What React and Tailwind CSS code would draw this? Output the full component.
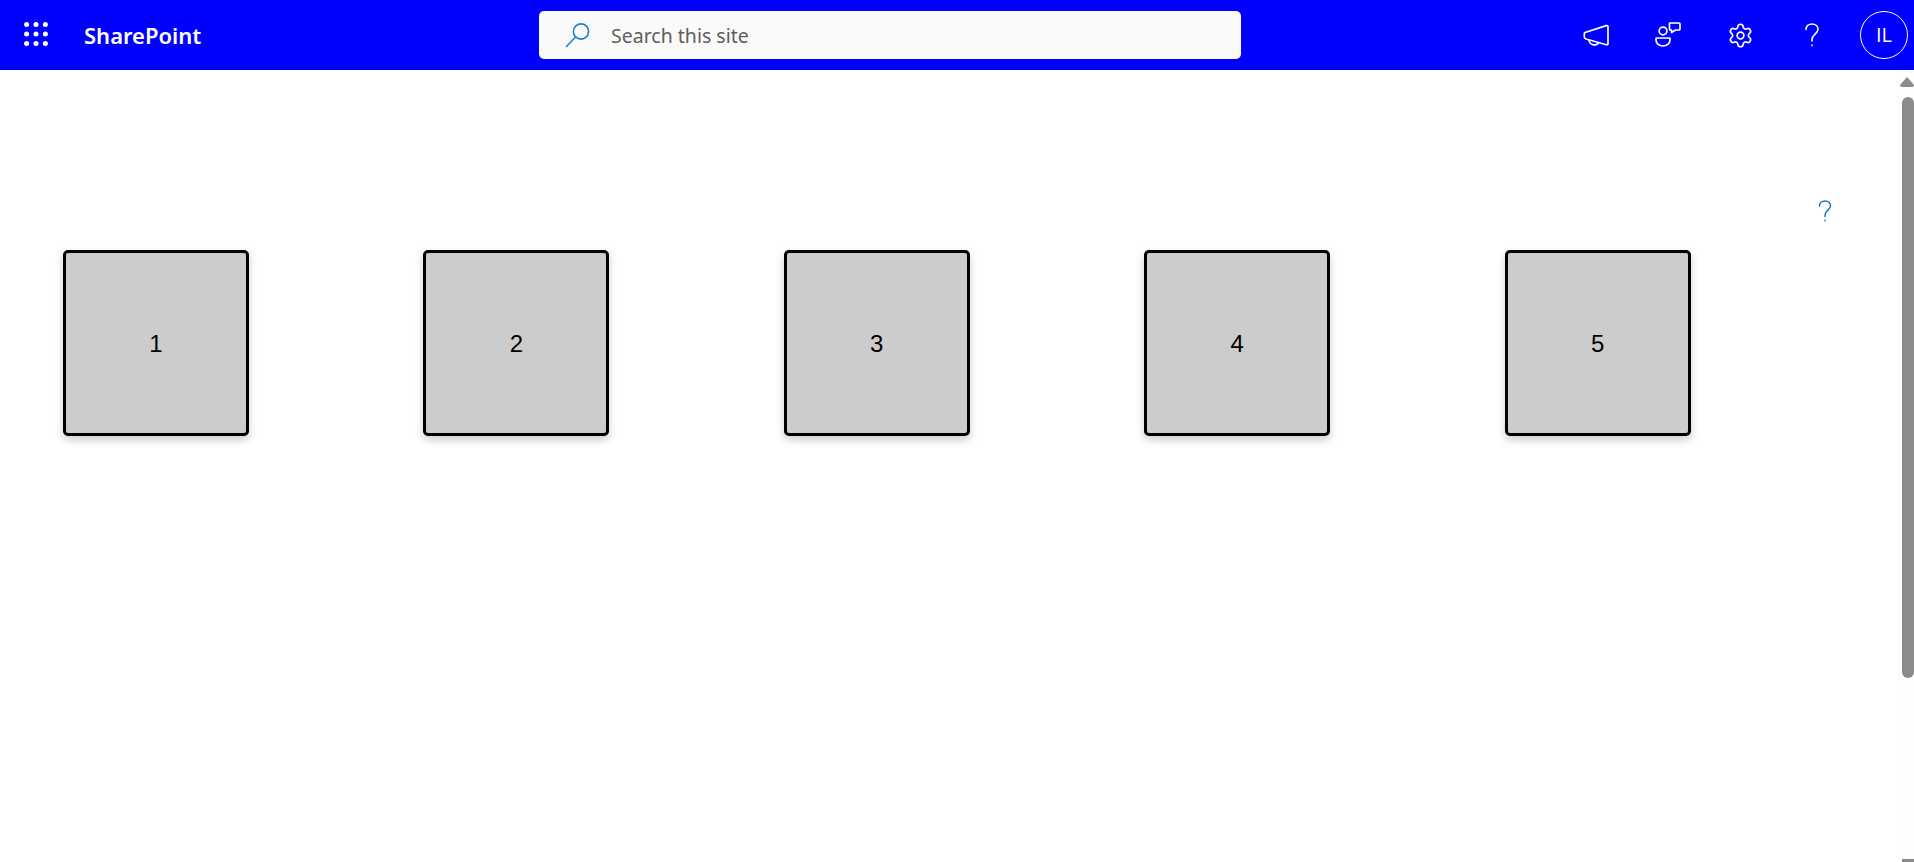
import { Settings } from 'lucide-react'

const BOXES = [1, 2, 3, 4, 5]

function Waffle() {
  const dots = []
  for (let y = 0; y < 3; y++) {
    for (let x = 0; x < 3; x++) {
      dots.push(<circle key={`${x}-${y}`} cx={2.5 + x * 9} cy={2.5 + y * 9} r="2.4" fill="#fff" />)
    }
  }
  return (
    <svg width="24" height="24" viewBox="0 0 23 23">
      {dots}
    </svg>
  )
}

function SearchIcon() {
  return (
    <svg width="26" height="26" viewBox="0 0 26 26" fill="none" stroke="#1b82d2" strokeWidth="1.6">
      <circle cx="16" cy="9.5" r="7.6" />
      <path d="M10.5 15 L1.5 24.5" strokeLinecap="round" />
    </svg>
  )
}

function Megaphone() {
  return (
    <svg width="26" height="24" viewBox="0 0 26 24" fill="none" stroke="#fff" strokeWidth="1.7" strokeLinejoin="round">
      <path d="M2 9.5 L23.2 2.6 Q25 2.2 25 4 L25 20.5 Q25 22 23.4 21.7 L3 16 Q1.3 15.5 1.3 13.8 L1.3 10.8 Q1.3 9.8 2 9.5 Z" />
      <path d="M6 17 C6.5 22.5 14 23.5 15.5 19.5" />
    </svg>
  )
}

function PeopleChat() {
  return (
    <svg width="26" height="26" viewBox="-1 -1 26 26" fill="none" stroke="#fff" strokeWidth="1.7" strokeLinejoin="round">
      <circle cx="7" cy="8" r="3.9" />
      <path d="M0.8 15 H13.4 Q14 15 14 15.6 V17 C14 20.8 10.6 23 7 23 C3.4 23 0 20.8 0 17 V15.6 Q0 15 0.8 15 Z" />
      <path d="M13.8 0 H23 Q24 0 24 1 V6 Q24 7 23 7 H19.5 L15.5 9.5 V7 H14.5 Q13.5 7 13.5 6 V1 Q13.5 0 13.8 0 Z" />
    </svg>
  )
}

function Question({ color, width, height, strokeWidth }) {
  return (
    <svg width={width} height={height} viewBox="0 0 14 24" fill="none" stroke={color} strokeWidth={strokeWidth} strokeLinecap="round">
      <path d="M1 6.5 C1 3 3.6 1 7 1 C10.5 1 13 3.2 13 6.3 C13 9 11.3 10.2 9.6 11.6 C8 12.9 7 14 7 16.6 V18" />
      <path d="M7 22 V22.6" />
    </svg>
  )
}

function Header() {
  return (
    <header className="h-[70px] bg-[#0000ff] flex items-center relative">
      <div className="w-[84px] pl-[24px] pb-[2px] shrink-0 flex items-center">
        <Waffle />
      </div>
      <div className="w-[455px] shrink-0 pt-[1px] text-white text-[22px] font-semibold font-['Noto_Sans',sans-serif]">
        SharePoint
      </div>
      <div className="w-[702px] h-[48px] shrink-0 bg-[#fafafa] rounded-[5px] flex items-center pl-[26px]">
        <SearchIcon />
        <span className="ml-[20px] pt-[1px] text-[19.5px] text-[#605e5c] font-['Noto_Sans',sans-serif]">Search this site</span>
      </div>
      <div className="flex-1 flex items-center justify-end pr-[6px]">
        <div className="w-[72px] flex justify-center"><Megaphone /></div>
        <div className="w-[72px] flex justify-center"><PeopleChat /></div>
        <div className="w-[72px] flex justify-center"><Settings size={27} color="#fff" strokeWidth={1.5} /></div>
        <div className="w-[72px] flex justify-center"><Question color="#fff" width={14} height={24} strokeWidth={1.6} /></div>
        <div className="ml-[12px] w-[48px] h-[48px] rounded-full border border-white flex items-center justify-center text-white text-[20px] font-['Open_Sans',sans-serif]">
          IL
        </div>
      </div>
    </header>
  )
}

function Scrollbar() {
  return (
    <div className="w-[17px] shrink-0 bg-[#fdfdfd] flex flex-col items-end">
      <svg width="14" height="10" viewBox="0 0 14 10" className="mt-[7px]">
        <path d="M7 0 L14 8 Q14 10 12 10 H2 Q0 10 0 8 Z" fill="#8c8c8c" />
      </svg>
      <div className="mt-[10px] w-[12px] h-[581px] bg-[#8b8b8b] rounded-t-[6px] rounded-b-[6px]"></div>
      <div className="mt-auto w-[12px] h-[3px] bg-[#8c8c8c]"></div>
    </div>
  )
}

export default function App() {
  return (
    <div className="h-[862px] overflow-hidden bg-white flex flex-col font-['Liberation_Sans',sans-serif]">
      <Header />
      <div className="flex-1 flex min-h-0">
        <main className="flex-1 min-w-0 pt-[130px]">
          <div className="h-[50px] flex justify-end pr-[65px]">
            <Question color="#1b6ec2" width={14} height={22} strokeWidth={1.6} />
          </div>
          <div className="flex gap-[174.4px] pl-[63px]">
            {BOXES.map(n => (
              <div
                key={n}
                className="w-[186px] h-[186px] pt-[2px] bg-[#cccccc] border-[3px] border-black rounded-[5px] shadow-[0_4px_8px_rgba(0,0,0,0.2)] flex items-center justify-center text-[24px] text-black"
              >
                {n}
              </div>
            ))}
          </div>
        </main>
        <Scrollbar />
      </div>
    </div>
  )
}
